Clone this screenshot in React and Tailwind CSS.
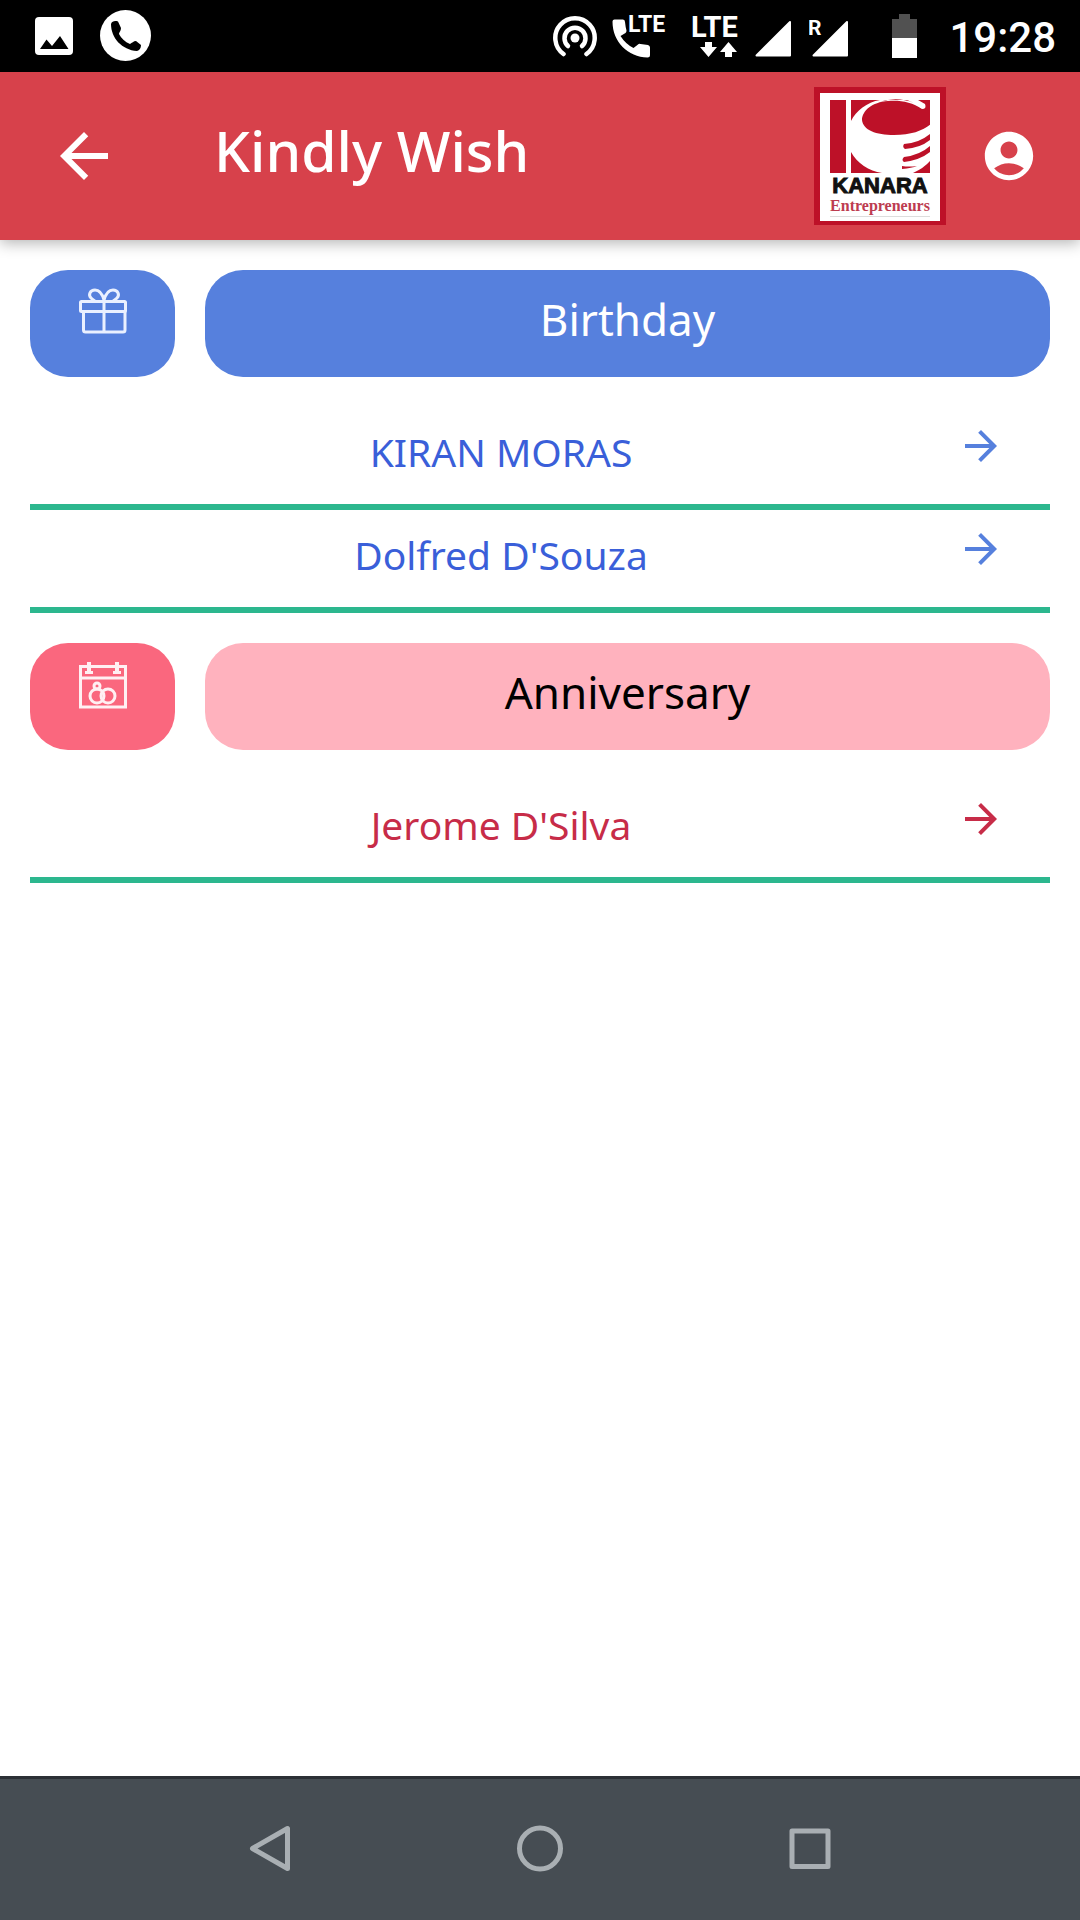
import { MdAccountCircle, MdArrowBack, MdArrowForward } from "react-icons/md";

function StatusBar() {
  return (
    <div className="flex h-[72px] items-start justify-between bg-black pl-[35px] pr-6 font-['Roboto',sans-serif] text-white">
      <div className="flex gap-[27px]">
        <svg className="h-[72px] w-[38px]" viewBox="35 0 38 72" aria-label="Picture saved">
          <rect x="35" y="17" width="38" height="38" rx="4" fill="#fff" />
          <path d="M40 49 L46.5 39.500 L52 46 L60 36 L68.500 49 Z" fill="#000" />
        </svg>
        <svg className="h-[72px] w-[51px]" viewBox="100 0 51 72" aria-label="Call">
          <circle cx="125.500" cy="35.500" r="25.500" fill="#fff" />
          <path
            d="M111 24 C112 21 115 20.500 118 21.500 L121 28 C121 31 119 32 119 34 C121 38 125 42 130 44 C132 43 133.500 41 136 41 L141 45 C141 48 139.500 50.500 137 51 C122 50 111 38 111 24 Z"
            fill="#000"
          />
        </svg>
      </div>
      <div className="flex">
        <svg className="mr-[15px] h-[72px] w-[44px]" viewBox="553 0 44 72" aria-label="Hotspot">
          <g fill="none" stroke="#fff" strokeWidth="4.500" strokeLinecap="round">
            <path d="M563.500 54 A19.700 19.700 0 1 1 586.500 54" />
            <path d="M568 46 A10.500 10.500 0 1 1 582 46" />
          </g>
          <circle cx="575" cy="38" r="4.500" fill="#fff" />
        </svg>
        <svg className="mr-[26px] h-[72px] w-[54px]" viewBox="612 0 54 72" aria-label="Voice over LTE">
          <path
            d="M614.500 19.500 H623 Q625 19.500 625 22 Q625.500 27 626.500 30.500 Q626.500 32 625.500 33 L620.500 36 Q625.500 44 633.500 48 L638 44.500 Q639 43.500 640.500 44 L648 45 Q650 45.500 650 47.500 V55 Q650 57.500 647.500 57.500 C628 57 612.500 42 612.500 21.500 Q612.500 19.500 614.500 19.500 Z"
            fill="#fff"
          />
          <text x="628" y="32" fill="#fff" fontSize="23" fontWeight="700">LTE</text>
        </svg>
        <svg className="mr-[15px] h-[72px] w-[48px]" viewBox="691 0 48 72" aria-label="LTE data">
          <text x="690" y="37" fill="#fff" fontSize="29" fontWeight="700">LTE</text>
          <path d="M704 42 h7 v5 h5 L707.500 57 L699 47 h5 Z M724 57 h7 v-5 h5 L727.500 42 L719 52 h5 Z" fill="#fff" />
        </svg>
        <svg className="mr-[18px] h-[72px] w-[36px]" viewBox="754 0 36 72" aria-label="Signal">
          <path d="M789 22 V55.500 H755.500 Z" fill="#fff" stroke="#fff" strokeWidth="2" strokeLinejoin="round" />
        </svg>
        <svg className="mr-[43px] h-[72px] w-[40px]" viewBox="808 0 40 72" aria-label="Roaming signal">
          <text x="807" y="35" fill="#fff" fontSize="21" fontWeight="700">R</text>
          <path d="M846 22 V55.500 H812.500 Z" fill="#fff" stroke="#fff" strokeWidth="2" strokeLinejoin="round" />
        </svg>
        <svg className="mr-8 h-[72px] w-[25px]" viewBox="892 0 25 72" aria-label="Battery">
          <path d="M899 14 h11 v5 h7 v19 h-25 v-19 h7 Z" fill="#515151" />
          <rect x="892" y="38" width="25" height="20" fill="#fff" />
        </svg>
        <time className="text-[42px] font-medium leading-[76px]">19:28</time>
      </div>
    </div>
  );
}

function Logo() {
  return (
    <svg className="h-[138px] w-[132px]" viewBox="0 0 132 138" aria-label="Kanara Entrepreneurs">
      <rect width="132" height="138" fill="#bd1128" />
      <rect x="6" y="6" width="120" height="128" fill="#fff" />
      <rect x="16" y="13" width="16" height="73" fill="#bd1128" />
      <rect x="37" y="13" width="79" height="73" fill="#bd1128" />
      <path
        d="M37 34 C42 24 53 15 66 13 H104 L111 17 Q113 22 108 22 C98 15 86 13 74 14 C58 15 48 24 48 33 C49 43 62 48 80 48 C97 48 108 44 117 37 V86 H68 C55 84 43 76 37 65 Z"
        fill="#fff"
      />
      <path d="M66 15 Q83 9 100 16 L93 13 H72 Z" fill="#bd1128" />
      <path
        d="M90 57 Q105 56 116 47 V53 Q106 61 91 62 Q88 60 90 57 Z M90 70 Q106 68 116 59 V65 Q106 73 90 75 Q87 73 90 70 Z M88 79 Q95 80 103 79 Q98 81 88 82 Z M99 86 Q110 81 116 74 V86 Z"
        fill="#bd1128"
      />
      <text
        x="66"
        y="106"
        textAnchor="middle"
        fill="#111"
        stroke="#111"
        strokeWidth="1"
        fontFamily="Liberation Sans, sans-serif"
        fontWeight="700"
        fontSize="22"
      >
        KANARA
      </text>
      <text
        x="66"
        y="124"
        textAnchor="middle"
        fill="#bd3c50"
        fontFamily="Liberation Serif, serif"
        fontWeight="700"
        fontSize="16"
      >
        Entrepreneurs
      </text>
      <path d="M16 129.500 H116" stroke="#ddd" />
    </svg>
  );
}

function GiftIcon() {
  return (
    <svg className="h-[46px] w-[48px]" viewBox="0 0 48 46" fill="none" stroke="#eaf0ff" strokeWidth="3" aria-hidden="true">
      <rect x="1.500" y="13.500" width="45" height="10" rx="1" />
      <path d="M4.500 23 V42 Q4.500 44 6.500 44 H44 Q46 44 46 42 V23 M25 13 V44" />
      <path d="M25 12 C23 5 20 2 16 2 C11 2 9 7 12 10 Q14 12 16 13 M25 12 C27 5 30 2 34 2 C39 2 41 7 38 10 Q36 12 34 13" />
    </svg>
  );
}

function RingsCalendarIcon() {
  return (
    <svg className="h-[48px] w-[48px]" viewBox="0 0 48 48" fill="none" stroke="#fff0f3" strokeWidth="3" aria-hidden="true">
      <path d="M1.500 5.500 H46.500 V46 H1.500 Z M1 17 H47" />
      <path d="M10 1 V10 M38 1 V10" strokeWidth="4" />
      <path d="M6 11.500 H14 M34 11.500 H42" />
      <circle cx="18" cy="35" r="7" />
      <circle cx="29" cy="35" r="7" />
      <circle cx="18" cy="25" r="3" />
    </svg>
  );
}

function SectionHeader({ icon, title, iconColor, barColor }) {
  return (
    <div className="mt-[30px] flex gap-[30px]">
      <div className={"flex h-[107px] w-[145px] shrink-0 items-start justify-center rounded-[38px] pt-[18px] " + iconColor}>
        {icon}
      </div>
      <h2 className={"h-[107px] flex-1 rounded-[38px] text-center text-[44px] leading-[98px] " + barColor}>{title}</h2>
    </div>
  );
}

function People({ names, textColor, arrowColor }) {
  return (
    <ul className="mt-[30px]">
      {names.map((name) => (
        <li key={name} className="border-b-[6px] border-[#2cb78e]">
          <button className="grid h-[97px] w-full grid-cols-[1fr_138px] items-start pl-[60px]">
            <span className={"text-center text-[39px] leading-[90px] " + textColor}>{name}</span>
            <MdArrowForward className={"mt-[15px] size-12 justify-self-center " + arrowColor} />
          </button>
        </li>
      ))}
    </ul>
  );
}

export default function App() {
  return (
    <div className="flex min-h-screen flex-col bg-white font-['Noto_Sans',sans-serif]">
      <StatusBar />
      <header className="flex h-[168px] items-center bg-[#d7414b] pl-12 pr-[42px] text-white shadow-[0_3px_14px_rgba(0,0,0,0.3)]">
        <button aria-label="Back">
          <MdArrowBack className="size-[72px]" />
        </button>
        <h1 className="ml-[94px] flex-1 pb-3 text-[57px] font-medium leading-[72px]">Kindly Wish</h1>
        <Logo />
        <button className="ml-[34px]" aria-label="Account">
          <MdAccountCircle className="size-[58px]" />
        </button>
      </header>
      <main className="flex-1 px-[30px]">
        <SectionHeader icon={<GiftIcon />} title="Birthday" iconColor="bg-[#5680dd]" barColor="bg-[#5680dd] text-white" />
        <People names={["KIRAN MORAS", "Dolfred D'Souza"]} textColor="text-[#3a5fd9]" arrowColor="text-[#5680dd]" />
        <SectionHeader icon={<RingsCalendarIcon />} title="Anniversary" iconColor="bg-[#fa677e]" barColor="bg-[#ffb2be] text-black" />
        <People names={["Jerome D'Silva"]} textColor="text-[#c72c48]" arrowColor="text-[#c72c48]" />
      </main>
      <nav className="grid h-[144px] grid-cols-3 items-center justify-items-center border-t-[3px] border-[#2c3036] bg-[#464d53] px-[12.5%] pb-[2px]">
        <button aria-label="Back">
          <svg className="size-12" viewBox="0 0 48 48" fill="none" stroke="#a9afb3" strokeWidth="5" strokeLinejoin="round">
            <path d="M41.500 3.500 V43.500 L6.500 23.500 Z" />
          </svg>
        </button>
        <button aria-label="Home">
          <svg className="size-12" viewBox="0 0 48 48" fill="none" stroke="#a9afb3" strokeWidth="5">
            <circle cx="24" cy="23.500" r="20.500" />
          </svg>
        </button>
        <button aria-label="Recent apps">
          <svg className="size-12" viewBox="0 0 48 48" fill="none" stroke="#a9afb3" strokeWidth="5" strokeLinejoin="round">
            <rect x="6" y="6" width="36" height="35.500" />
          </svg>
        </button>
      </nav>
    </div>
  );
}
